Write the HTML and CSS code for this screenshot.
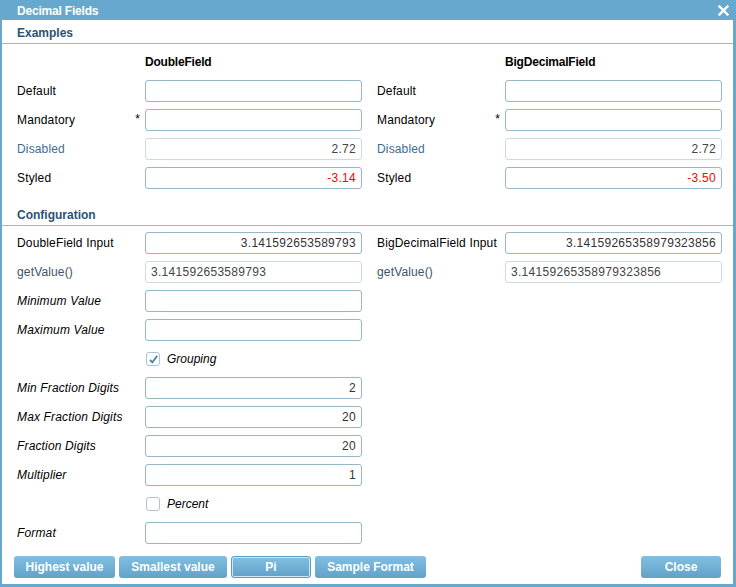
FILE: index.html
```html
<!DOCTYPE html>
<html>
<head>
<meta charset="utf-8">
<link rel="stylesheet" href="styles.css">
</head>
<body>
<div class="window">
  <div class="titlebar">
    <span class="title">Decimal Fields</span>
    <svg class="close-x" width="11" height="11" viewBox="0 0 11 11"><path d="M1.5 1.5 L9.5 9.5 M9.5 1.5 L1.5 9.5" stroke="#fff" stroke-width="2.4" stroke-linecap="square"/></svg>
  </div>
  <div class="content">
    <div class="section-head">Examples</div>
    <div class="rows rows-examples">
      <div class="row">
        <div></div><div class="colhead">DoubleField</div>
        <div></div><div class="colhead">BigDecimalField</div>
      </div>
      <div class="row">
        <div class="label">Default</div><div class="field"></div>
        <div class="label l2">Default</div><div class="field"></div>
      </div>
      <div class="row">
        <div class="label">Mandatory<span class="req">*</span></div><div class="field"></div>
        <div class="label l2">Mandatory<span class="req">*</span></div><div class="field"></div>
      </div>
      <div class="row">
        <div class="label dis">Disabled</div><div class="field disabled right">2.72</div>
        <div class="label l2 dis">Disabled</div><div class="field disabled right">2.72</div>
      </div>
      <div class="row">
        <div class="label">Styled</div><div class="field right red">-3.14</div>
        <div class="label l2">Styled</div><div class="field right red">-3.50</div>
      </div>
    </div>
    <div class="section-head config">Configuration</div>
    <div class="rows rows-config">
      <div class="row">
        <div class="label">DoubleField Input</div><div class="field right">3.141592653589793</div>
        <div class="label l2">BigDecimalField Input</div><div class="field right">3.14159265358979323856</div>
      </div>
      <div class="row">
        <div class="label ro">getValue()</div><div class="field disabled">3.141592653589793</div>
        <div class="label l2 ro">getValue()</div><div class="field disabled">3.14159265358979323856</div>
      </div>
      <div class="row">
        <div class="label it">Minimum Value</div><div class="field"></div>
      </div>
      <div class="row">
        <div class="label it">Maximum Value</div><div class="field"></div>
      </div>
      <div class="row">
        <div></div>
        <div class="check"><span class="box"><svg width="11" height="11" viewBox="0 0 11 11"><path d="M2 5.8 L4.4 8.4 L9.2 1.8" fill="none" stroke="#4d7fa6" stroke-width="1.8"/></svg></span><span class="it">Grouping</span></div>
      </div>
      <div class="row">
        <div class="label it">Min Fraction Digits</div><div class="field right">2</div>
      </div>
      <div class="row">
        <div class="label it">Max Fraction Digits</div><div class="field right">20</div>
      </div>
      <div class="row">
        <div class="label it">Fraction Digits</div><div class="field right">20</div>
      </div>
      <div class="row">
        <div class="label it">Multiplier</div><div class="field right">1</div>
      </div>
      <div class="row">
        <div></div>
        <div class="check"><span class="box"></span><span class="it">Percent</span></div>
      </div>
      <div class="row">
        <div class="label it">Format</div><div class="field"></div>
      </div>
    </div>
    <div class="buttons">
      <div class="btn w1">Highest value</div>
      <div class="btn w2">Smallest value</div>
      <div class="btn w3 focus">Pi</div>
      <div class="btn w4">Sample Format</div>
      <div class="spacer"></div>
      <div class="btn w3">Close</div>
    </div>
  </div>
</div>
</body>
</html>
```
FILE: styles.css
```css
html, body {
  margin: 0;
  padding: 0;
  background: #fff;
}
body {
  font-family: "Liberation Sans", Arial, sans-serif;
  font-size: 12px;
  color: #111;
}
.window {
  width: 736px;
  height: 587px;
  box-sizing: border-box;
  background: #67a8ce;
  padding: 0 3px 3px 2px;
  display: flex;
  flex-direction: column;
}
.titlebar {
  height: 20px;
  display: flex;
  align-items: center;
  justify-content: space-between;
  padding: 0 4px 0 15px;
  color: #fff;
}
.title {
  font-weight: bold;
  font-size: 12px;
  letter-spacing: -0.2px;
  padding-top: 2px;
}
.close-x {
  display: block;
  margin-top: 0;
}
.content {
  flex: 1;
  background: #fff;
  display: flex;
  flex-direction: column;
}
.section-head {
  height: 21px;
  line-height: 22px;
  padding: 2px 0 0 15px;
  border-bottom: 1px solid #93bbd4;
  color: #2c5274;
  font-weight: bold;
}
.section-head.config {
  margin-top: 13px;
}
.rows {
  display: flex;
  flex-direction: column;
  gap: 7px;
  padding-left: 15px;
}
.rows-examples {
  padding-top: 7px;
}
.rows-config {
  padding-top: 6px;
}
.row {
  display: grid;
  grid-template-columns: 128px 217px 143px 217px;
  height: 22px;
}
.colhead {
  font-weight: bold;
  line-height: 22px;
  color: #000;
  letter-spacing: -0.2px;
}
.label {
  line-height: 22px;
  display: flex;
  justify-content: space-between;
  padding-right: 5px;
  color: #000;
  white-space: nowrap;
  letter-spacing: 0.15px;
}
.label.l2 {
  padding-left: 15px;
}
.label.dis {
  color: #3d6d93;
}
.label.ro {
  color: #3b5369;
}
.req {
  color: #000;
  margin-top: -1px;
}
.it {
  font-style: italic;
}
.field {
  box-sizing: border-box;
  height: 22px;
  border: 1px solid #95b7c8;
  border-radius: 3px;
  background: #fff;
  line-height: 20px;
  padding: 0 5px;
  color: #333;
  white-space: nowrap;
  overflow: hidden;
  letter-spacing: 0.3px;
}
.field.disabled {
  border-color: #cbdbe4;
  color: #444;
}
.field.right {
  text-align: right;
}
.field.red {
  color: #f00;
}
.check {
  display: flex;
  align-items: center;
  gap: 7px;
  padding-left: 1px;
  color: #000;
}
.box {
  box-sizing: border-box;
  width: 14px;
  height: 14px;
  border: 1px solid #a9c4d4;
  border-radius: 3px;
  display: flex;
  align-items: center;
  justify-content: center;
}
.box svg {
  display: block;
}
.buttons {
  display: flex;
  gap: 4px;
  padding: 12px 12px 0 12px;
}
.spacer {
  flex: 1;
}
.btn {
  box-sizing: border-box;
  height: 22px;
  line-height: 22px;
  text-align: center;
  color: #fff;
  font-weight: bold;
  border-radius: 3px;
  background: linear-gradient(#82bfe1, #61a2ca);
}
.btn.focus {
  border: 1px solid #5d9dc4;
  box-shadow: inset 0 0 0 1px #cfe6f4;
  line-height: 20px;
}
.w1 { width: 101px; }
.w2 { width: 108px; }
.w3 { width: 80px; }
.w4 { width: 111px; }
```
